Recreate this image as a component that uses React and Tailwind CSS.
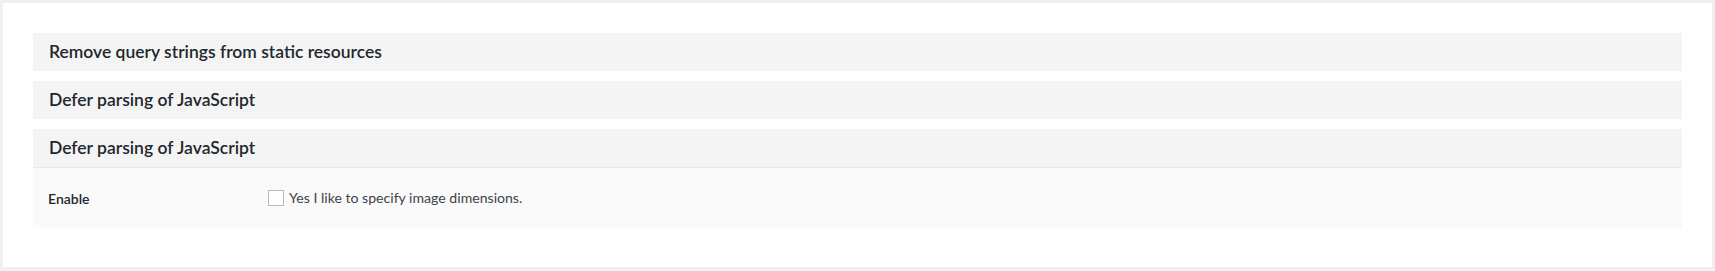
export default function App() {
  const sections = [
    { title: 'Remove query strings from static resources' },
    { title: 'Defer parsing of JavaScript' },
  ];

  return (
    <div className="min-h-[271px] bg-[#f0f0f1] p-[3px] font-['Lato',sans-serif] text-[#23282d]">
      <div className="bg-white px-[30px] pt-[30px] pb-[29px]">
        {sections.map((s, i) => (
          <div key={i} className="mb-[10px] flex h-[38px] items-center bg-[#f4f4f4] px-4">
            <h3 className="text-[17.5px] font-semibold">{s.title}</h3>
          </div>
        ))}

        {/* open panel */}
        <div className="mb-[10px] bg-[#fafafa]">
          <div className="flex h-[39px] items-center border-b border-[#e8e8e8] bg-[#f4f4f4] px-4">
            <h3 className="text-[17.5px] font-semibold">Defer parsing of JavaScript</h3>
          </div>
          <div className="flex h-[60px] items-center px-[15px]">
            <span className="w-[220px] text-[14px] font-semibold">Enable</span>
            <label className="flex items-center gap-[5px] text-[14.1px] text-[#3c434a]">
              <span className="h-4 w-4 border border-[#b4b9be] bg-white" />
              Yes I like to specify image dimensions.
            </label>
          </div>
        </div>
      </div>
    </div>
  );
}
